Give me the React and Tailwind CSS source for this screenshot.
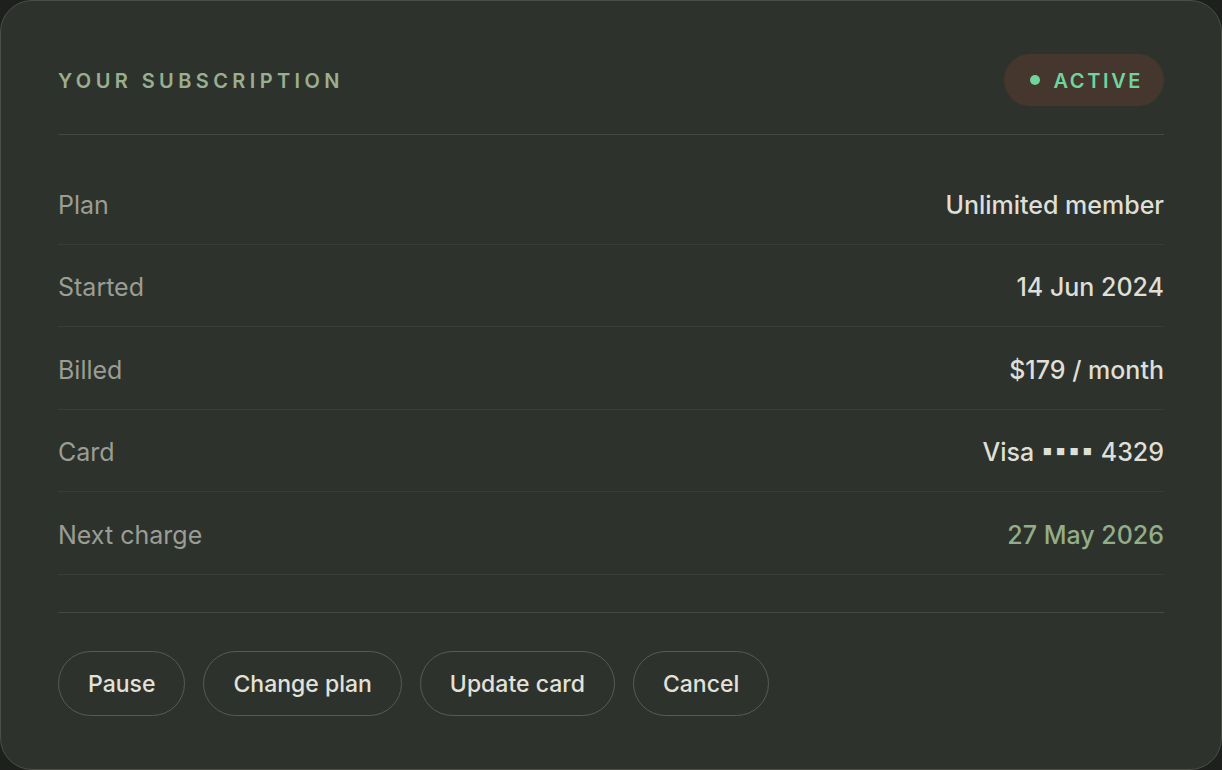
import React from 'react';

const rows = [
  { label: 'Plan', value: 'Unlimited member' },
  { label: 'Started', value: '14 Jun 2024' },
  { label: 'Billed', value: '$179 / month' },
  { label: 'Card', value: 'Visa ▪▪▪▪ 4329' },
  { label: 'Next charge', value: '27 May 2026', accent: true },
];

const actions = ['Pause', 'Change plan', 'Update card', 'Cancel'];

const App = () => {
  return (
    <div className="min-h-screen bg-[#1d201c]" style={{ fontFamily: 'Inter, "Noto Sans", sans-serif' }}>
      <div className="w-[1222px] h-[770px] rounded-[32px] border border-[#4b4f48] bg-[#2e322d] px-[57px] pt-[53px]">
        {/* Header */}
        <div className="flex items-center justify-between pb-[28px] border-b border-[#454942]">
          <h3 className="pt-[2px] text-[20px] font-semibold tracking-[0.22em] text-[#9aae90]">
            YOUR SUBSCRIPTION
          </h3>
          <div className="flex items-center gap-[14px] h-[52px] pl-[26px] pr-[21px] rounded-full bg-[#45372d]">
            <span className="w-[10px] h-[10px] rounded-full bg-[#6fd59c]"></span>
            <span className="pt-[2px] text-[20px] font-semibold tracking-[0.13em] text-[#6fd59c]">ACTIVE</span>
          </div>
        </div>

        {/* Details */}
        <div className="mt-[27px]">
          {rows.map((row) => (
            <div
              key={row.label}
              className="flex items-center justify-between h-[82.5px] pt-[5px] border-b border-[#393d37]"
            >
              <span className="text-[25px] text-[#9a9d94]">{row.label}</span>
              <span className={`text-[25px] font-medium ${row.accent ? 'text-[#92ad88]' : 'text-[#dedfd7]'}`}>
                {row.value}
              </span>
            </div>
          ))}
        </div>

        {/* Actions */}
        <div className="mt-[37px] pt-[38px] border-t border-[#454942] flex gap-[18px]">
          {actions.map((a) => (
            <button
              key={a}
              className="h-[65px] px-[29px] pt-[3px] rounded-full border border-[#575b54] text-[23px] font-medium text-[#e2e2da]"
            >
              {a}
            </button>
          ))}
        </div>
      </div>
    </div>
  );
};

export default App;
